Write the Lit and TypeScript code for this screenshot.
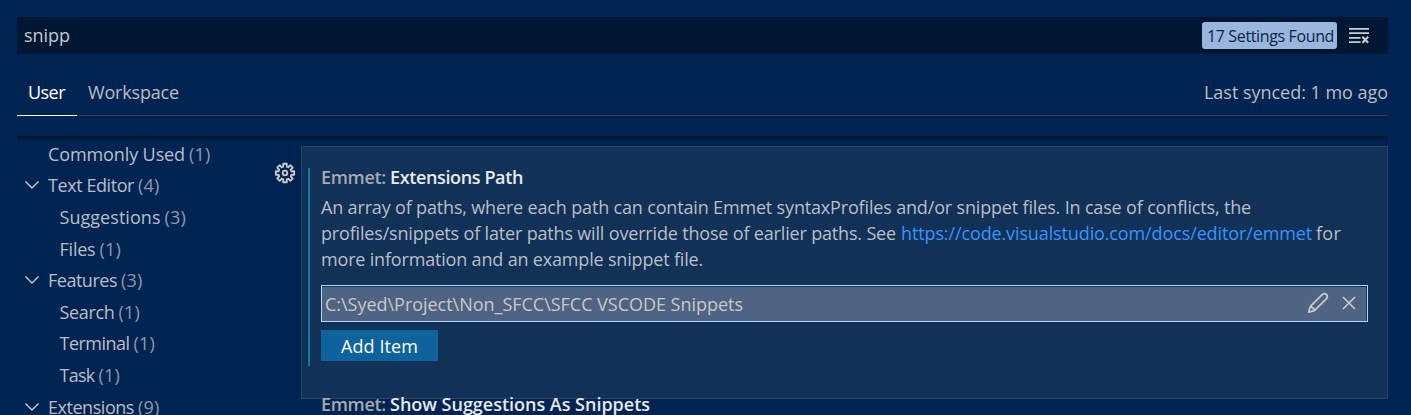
import { LitElement, html, css } from "lit";
import { customElement, property } from "lit/decorators.js";

/** A run of text tracked so that it fills a given advance width. */
@customElement("fit-text")
class FitText extends LitElement {
  @property({ type: Number }) w = 0;
  @property() text = "";
  static styles = css`
    :host { display: inline-block; white-space: pre; }
    span { display: inline-block; white-space: pre; }
  `;
  firstUpdated() {
    const span = this.renderRoot.querySelector("span") as HTMLElement;
    const natural = span.getBoundingClientRect().width;
    span.style.letterSpacing = `${(this.w - natural) / this.text.length}px`;
    this.style.width = `${this.w}px`;
  }
  render() {
    return html`<span>${this.text}</span>`;
  }
}

const t = (text: string, w: number) => html`<fit-text .text=${text} .w=${w}></fit-text>`;

interface Row { label: string; w: number; count: number; child?: boolean; open?: boolean; }

const rows: Row[] = [
  { label: "Commonly Used", w: 137, count: 1 },
  { label: "Text Editor", w: 86, count: 4, open: true },
  { label: "Suggestions", w: 101, count: 3, child: true },
  { label: "Files", w: 36, count: 1, child: true },
  { label: "Features", w: 69, count: 3, open: true },
  { label: "Search", w: 55, count: 1, child: true },
  { label: "Terminal", w: 70, count: 1, child: true },
  { label: "Task", w: 35, count: 1, child: true },
  { label: "Extensions", w: 86, count: 9, open: true },
];

const gearPath = (() => {
  const p: string[] = [];
  const n = 8;
  for (let i = 0; i < n; i++) {
    const a = (i * 2 * Math.PI) / n;
    const pts: [number, number][] = [[6.6, -0.27], [9.4, -0.19], [9.4, 0.19], [6.6, 0.27]];
    for (const [r, d] of pts) {
      p.push(`${(11 + r * Math.sin(a + d)).toFixed(2)} ${(11 - r * Math.cos(a + d)).toFixed(2)}`);
    }
  }
  return `M${p.join("L")}Z`;
})();

@customElement("app-root")
class AppRoot extends LitElement {
  static styles = css`
    :host {
      display: block; box-sizing: border-box; width: 1411px; height: 415px; overflow: hidden;
      padding: 17px 23px 0 17px; background: #002451; color: #b9bec7;
      font: 18px/26px "Open Sans", "Noto Sans", sans-serif;
    }
    svg { display: block; fill: none; stroke: #cccccc; }
    .search { display: flex; align-items: center; height: 37px; background: #001733; color: #c6c8ca; padding-left: 7px; }
    .search .query { flex: 1; height: 28px; }
    .badge { box-sizing: border-box; height: 27px; width: 135px; padding-left: 5px; border-radius: 3px; background: #9ab6dc; color: #0a2347; font-size: 16px; line-height: 28px; }
    .clear { margin: 0 18px 0 11px; }
    .tabs { display: flex; height: 61px; border-bottom: 1px solid #34404d; line-height: 76px; }
    .tab { box-sizing: border-box; height: 62px; padding: 0 11px; }
    .tab.active { width: 60px; color: #fff; border-bottom: 1px solid #fff; }
    .tab.rest { flex: 1; padding-left: 11px; }
    .shadow { height: 5px; margin-top: 20px; background: linear-gradient(#001128, #001a3b 45%, #00214b); }
    .body { display: grid; grid-template-columns: 257px 27px 1fr; margin-top: -3px; }
    .row { display: flex; align-items: center; height: 31.6px; padding-left: 7px; }
    .twist { width: 24px; }
    .row.child .twist { width: 35.5px; }
    .count { color: #8c99aa; margin-left: 4px; }
    .gear { padding-top: 24px; }
    .detail { padding-top: 8px; min-width: 0; }
    .card { box-sizing: border-box; height: 253px; border: 1px solid #2a4469; background: #123157; padding: 21px 19px 0 6px; }
    .setting { display: flow-root; box-sizing: border-box; height: 198px; border-left: 2px solid #0c7d9d; padding-left: 11px; }
    .title { display: flex; height: 26px; font-weight: 600; color: #a5aab2; }
    .title b { font-weight: 600; color: #e8eaee; margin-left: 4px; }
    .setting .title { margin-top: -4px; }
    .desc { padding-top: 4px; }
    .line { display: flex; height: 26px; }
    .link { color: #3794ff; margin-left: 5px; }
    .line .link + * { margin-left: 4px; }
    .item { box-sizing: border-box; height: 37px; margin-top: 13px; border: 1px solid #b5d3fb; padding: 1px 1px 0 0; }
    .fill { display: flex; align-items: center; height: 34px; background: #4f6482; color: #c8c9c9; padding-left: 3px; }
    .fill .grow { flex: 1; }
    .pencil { margin: 0 13px 2px 0; }
    .close { margin: 0 10px 2px 0; }
    .button { width: 117px; height: 31px; line-height: 32px; margin-top: 8px; background: #0e639c; color: #fff; text-align: center; }
    .next { margin: -8px 0 0 20px; position: relative; }
  `;

  render() {
    return html`
      <div class="search">
        <div class="query">${t("snipp", 46)}</div>
        <div class="badge">${t("17 Settings Found", 127)}</div>
        <svg class="clear" width="22" height="18" viewBox="0 0 22 18" stroke-width="1.8">
          <path d="M1 1.9H21M1 6.2H21M1 10.8H12.5M1 15.2H12.5" />
          <path d="M14.3 9.8L20.2 15.7M20.2 9.8L14.3 15.7" stroke-width="2.1" />
        </svg>
      </div>
      <div class="tabs">
        <div class="tab active">${t("User", 37)}</div>
        <div class="tab rest">${t("Workspace", 91)}</div>
        <div>${t("Last synced: 1 mo ago", 184)}</div>
      </div>
      <div class="shadow"></div>
      <div class="body">
        <div>
          ${rows.map((r) => html`
            <div class="row ${r.child ? "child" : ""}">
              <div class="twist">
                ${r.open ? html`<svg width="16" height="10" viewBox="0 0 16 10" stroke-width="1.4"><path d="M1.5 1.5L8 8L14.5 1.5" /></svg>` : ""}
              </div>
              ${t(r.label, r.w)}
              <div class="count">${t(`(${r.count})`, 21.5)}</div>
            </div>`)}
        </div>
        <div class="gear">
          <svg width="22" height="22" viewBox="0 0 22 22" stroke-width="1.8" stroke-linejoin="round">
            <path d=${gearPath} /><circle cx="11" cy="11" r="2.3" />
          </svg>
        </div>
        <div class="detail">
          <div class="card">
            <div class="setting">
              <div class="title">${t("Emmet:", 65)}<b>${t("Extensions Path", 133)}</b></div>
              <div class="desc">
                <div class="line">${t("An array of paths, where each path can contain Emmet syntaxProfiles and/or snippet files. In case of conflicts, the", 930)}</div>
                <div class="line">${t("profiles/snippets of later paths will override those of earlier paths. See", 575)}<span class="link">${t("https://code.visualstudio.com/docs/editor/emmet", 411)}</span>${t("for", 25)}</div>
                <div class="line">${t("more information and an example snippet file.", 382)}</div>
              </div>
              <div class="item">
                <div class="fill">
                  <div class="grow">${t("C:\\Syed\\Project\\Non_SFCC\\SFCC VSCODE Snippets", 418)}</div>
                  <svg class="pencil" width="22" height="22" viewBox="0 0 22 22" stroke-width="1.7" stroke-linejoin="round">
                    <path d="M1.7 20.3L3.2 14.6L15.4 2.4Q17.6 .9 19.6 2.6Q21.1 4.5 19.6 6.6L7.4 18.6ZM3.2 14.6Q6.4 15.2 7.4 18.6" />
                  </svg>
                  <svg class="close" width="14" height="14" viewBox="0 0 14 14" stroke-width="1.6"><path d="M1 1L13 13M13 1L1 13" /></svg>
                </div>
              </div>
              <div class="button">${t("Add Item", 77)}</div>
            </div>
          </div>
          <div class="title next">${t("Emmet:", 65)}<b>${t("Show Suggestions As Snippets", 260)}</b></div>
        </div>
      </div>
    `;
  }
}
